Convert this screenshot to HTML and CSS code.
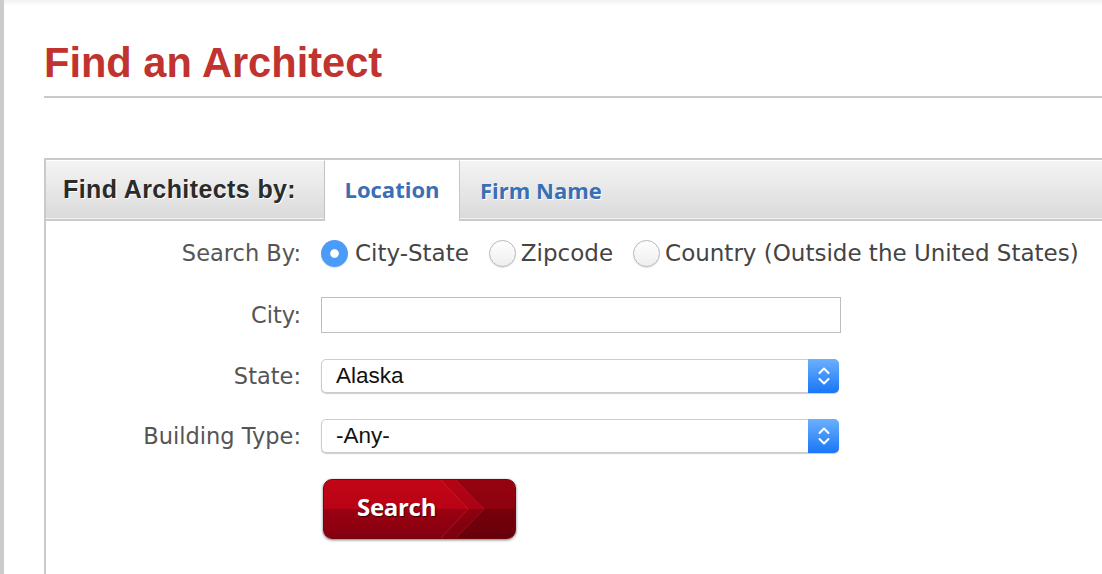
FILE: index.html
```html
<!DOCTYPE html>
<html>
<head>
<meta charset="utf-8">
<link rel="stylesheet" href="styles.css">
</head>
<body>
<div class="page">
  <h1 class="title">Find an Architect</h1>
  <div class="rule"></div>
  <div class="box">
    <div class="tabbar">
      <div class="tab-label">Find Architects by:</div>
      <div class="tab active">Location</div>
      <div class="tab">Firm Name</div>
      <div class="tab-fill"></div>
    </div>
    <div class="form">
      <div class="row row-radio">
        <div class="label">Search By:</div>
        <div class="radios">
          <span class="radio checked"></span><span class="rtext">City-State</span>
          <span class="radio"></span><span class="rtext">Zipcode</span>
          <span class="radio"></span><span class="rtext">Country (Outside the United States)</span>
        </div>
      </div>
      <div class="row">
        <div class="label">City:</div>
        <div class="input"></div>
      </div>
      <div class="row">
        <div class="label">State:</div>
        <div class="select"><span class="value">Alaska</span><span class="arrow"><svg width="14" height="22" viewBox="0 0 14 22"><path d="M2.5 8 L7 3.5 L11.5 8 M2.5 14 L7 18.5 L11.5 14" fill="none" stroke="#fff" stroke-width="2" stroke-linecap="round" stroke-linejoin="round"/></svg></span></div>
      </div>
      <div class="row">
        <div class="label">Building Type:</div>
        <div class="select"><span class="value">-Any-</span><span class="arrow"><svg width="14" height="22" viewBox="0 0 14 22"><path d="M2.5 8 L7 3.5 L11.5 8 M2.5 14 L7 18.5 L11.5 14" fill="none" stroke="#fff" stroke-width="2" stroke-linecap="round" stroke-linejoin="round"/></svg></span></div>
      </div>
      <div class="row">
        <div class="label"></div>
        <div class="button">
          <svg class="chev" width="193" height="58" viewBox="0 0 193 58" preserveAspectRatio="none"><path d="M117 0 L144 29 L117 58 H193 V0 Z" fill="rgba(0,0,0,0.07)"/><path d="M132 0 L160 29 L132 58 H193 V0 Z" fill="rgba(0,0,0,0.17)"/><path d="M117 0 L144 29 L117 58" fill="none" stroke="rgba(255,90,90,0.25)" stroke-width="1"/><path d="M132 0 L160 29 L132 58" fill="none" stroke="rgba(255,80,80,0.2)" stroke-width="1"/></svg>
          <span class="btn-text">Search</span>
        </div>
      </div>
    </div>
  </div>
</div>
</body>
</html>
```
FILE: styles.css
```css
html, body {
  margin: 0;
  padding: 0;
}
body {
  background: linear-gradient(#f2f2f2, #ffffff 6px);
  height: 574px;
  overflow: hidden;
}
.page {
  border-left: 4px solid #cbcbcb;
  height: 574px;
  padding-left: 40px;
  box-sizing: border-box;
}
.title {
  margin: 0;
  padding-top: 39px;
  font-family: "Liberation Sans", Arial, sans-serif;
  font-weight: bold;
  font-size: 41.6px;
  line-height: 48px;
  color: #c0332f;
  height: 49px;
}
.rule {
  margin-top: 8px;
  height: 2px;
  background: #c9c9c9;
}
.box {
  margin-top: 60px;
  border-top: 2px solid #cacaca;
  border-left: 2px solid #cacaca;
  height: 420px;
}
.tabbar {
  display: flex;
  height: 61px;
}
.tab-label, .tab-fill, .tab {
  box-sizing: border-box;
  height: 61px;
}
.tab-label, .tab-fill {
  background: linear-gradient(#f4f4f4, #dadada);
  border-top: 1px solid #fff;
  border-bottom: 2px solid #cbcbcb;
  box-shadow: inset 0 -1px 0 #f2f2f2;
}
.tab-label {
  width: 279px;
  padding-left: 17px;
  font-family: "Liberation Sans", Arial, sans-serif;
  font-weight: bold;
  font-size: 25px;
  line-height: 57px;
  color: #2b2b2b;
  text-shadow: 1px 1px 0 #fff;
  border-right: 1px solid #c2c2c2;
  letter-spacing: 0.4px;
  white-space: nowrap;
}
.tab {
  font-family: "Open Sans", "DejaVu Sans", sans-serif;
  font-weight: bold;
  font-size: 22px;
  line-height: 58px;
  color: #3a6fb6;
  text-align: center;
  white-space: nowrap;
}
.tab.active {
  background: #fff;
  width: 134px;
}
.tab:not(.active) {
  width: 164px;
  padding-left: 20px;
  text-align: left;
  background: linear-gradient(#f4f4f4, #dadada);
  border-top: 1px solid #fff;
  border-left: 1px solid #c6c6c6;
  border-bottom: 2px solid #cbcbcb;
  text-shadow: 1px 1px 0 #fff;
  box-shadow: inset 0 -1px 0 #f2f2f2;
}
.tab-fill {
  flex: 1;
}
.form {
  padding-top: 16px;
  display: flex;
  flex-direction: column;
  gap: 26px;
}
.row {
  display: grid;
  grid-template-columns: 255px auto;
  column-gap: 20px;
  align-items: center;
}
.row-radio {
  height: 32px;
  margin-bottom: 2px;
}
.label {
  text-align: right;
  font-family: "DejaVu Sans", sans-serif;
  font-size: 22.5px;
  color: #555;
  white-space: nowrap;
}
.radios {
  display: flex;
  align-items: center;
  font-family: "DejaVu Sans", sans-serif;
  font-size: 23px;
  color: #444;
  white-space: nowrap;
}
.radio {
  width: 27px;
  height: 27px;
  border-radius: 50%;
  box-sizing: border-box;
  border: 1px solid #b8b8b8;
  background: linear-gradient(#fff, #eeeeee);
  box-shadow: 0 1px 1px rgba(0,0,0,0.12);
  margin-right: 5px;
  margin-left: 20px;
  flex: none;
}
.radio:first-child {
  margin-left: 0;
  margin-right: 7px;
}
.radio.checked {
  border: none;
  background: radial-gradient(circle, #fff 0 3.8px, #4b9cf8 4.8px);
}
.input {
  width: 520px;
  height: 36px;
  box-sizing: border-box;
  border: 1px solid #bdbdbd;
  background: #fff;
}
.select {
  width: 518px;
  height: 34px;
  box-sizing: border-box;
  display: flex;
  border: 1px solid #cdcdcd;
  border-radius: 5px;
  box-shadow: 0 1px 1px rgba(0,0,0,0.2);
  background: #fff;
}
.value {
  flex: 1;
  padding-left: 14px;
  font-family: "Liberation Sans", Arial, sans-serif;
  font-size: 22.5px;
  line-height: 32px;
  color: #111;
}
.arrow {
  width: 31px;
  margin: -1px -1px -1px 0;
  border-radius: 0 5px 5px 0;
  background: linear-gradient(#6cb0fc, #1976f6);
  display: flex;
  align-items: center;
  justify-content: center;
}
.button {
  margin-left: 2px;
  width: 193px;
  height: 60px;
  box-sizing: border-box;
  border-radius: 9px;
  border: 1px solid #6e0a0e;
  background: linear-gradient(#c30516 0%, #b80315 49%, #9a0011 51%, #860010 100%);
  box-shadow: 0 1px 3px rgba(0,0,0,0.55);
  display: flex;
  align-items: center;
  padding-bottom: 5px;
  overflow: hidden;
  position: relative;
}
.btn-text {
  padding-left: 33px;
  font-family: "Open Sans", "DejaVu Sans", sans-serif;
  font-weight: bold;
  font-size: 24px;
  color: #fff;
  text-shadow: 1px 1px 1px rgba(0,0,0,0.6);
  letter-spacing: -0.3px;
  position: relative;
}
.chev {
  position: absolute;
  left: 0;
  top: 0;
}
```
